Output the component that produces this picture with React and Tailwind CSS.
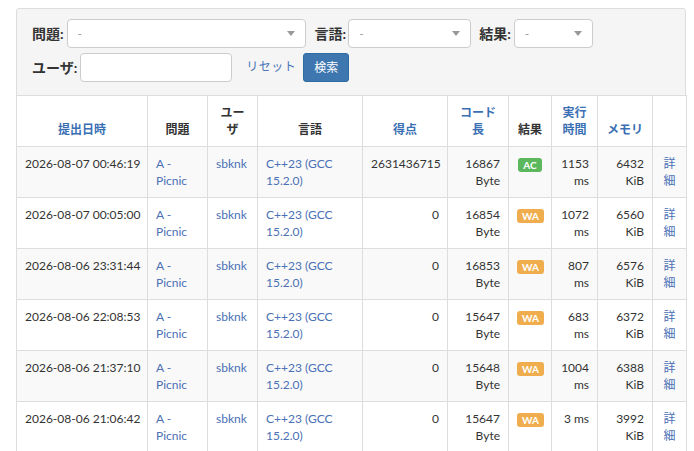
import React from "react";

const rows = [
  { date: "2026-08-07 00:46:19", score: "2631436715", len: "16867", res: "AC", time: "1153", mem: "6432" },
  { date: "2026-08-07 00:05:00", score: "0", len: "16854", res: "WA", time: "1072", mem: "6560" },
  { date: "2026-08-06 23:31:44", score: "0", len: "16853", res: "WA", time: "807", mem: "6576" },
  { date: "2026-08-06 22:08:53", score: "0", len: "15647", res: "WA", time: "683", mem: "6372" },
  { date: "2026-08-06 21:37:10", score: "0", len: "15648", res: "WA", time: "1004", mem: "6388" },
  { date: "2026-08-06 21:06:42", score: "0", len: "15647", res: "WA", time: "3", mem: "3992" },
];

const Select = ({ className }) => (
  <div
    className={`h-[29px] bg-white border border-[#ccc] rounded-[4px] flex items-center justify-between pl-[10px] pr-[10px] ${className}`}
  >
    <span className="text-[12px] text-[#999]">-</span>
    <span className="w-0 h-0 border-l-[4px] border-r-[4px] border-t-[5px] border-l-transparent border-r-transparent border-t-[#999]" />
  </div>
);

const Th = ({ children, link, className = "" }) => (
  <th
    className={`border border-[#ddd] px-2 py-2 align-bottom text-center font-bold ${
      link ? "text-[#3a70b3]" : "text-[#333]"
    } ${className}`}
  >
    {children}
  </th>
);

const Td = ({ children, className = "" }) => (
  <td className={`border border-[#ddd] px-2 py-2 align-top ${className}`}>{children}</td>
);

export default function App() {
  return (
    <div
      className="bg-white min-h-screen pt-2 text-[#333]"
      style={{ fontFamily: "Lato, 'Noto Sans CJK JP', sans-serif" }}
    >
      <div className="ml-4 w-[670px] border border-[#ddd] rounded-t-[3px] bg-[#f5f5f5]">
        <div className="pl-[15px] pt-[10px] pb-[13px] flex flex-col gap-[4px]">
          <div className="flex items-center">
            <span className="text-[14px] font-bold mr-[3px]">問題:</span>
            <Select className="w-[239px]" />
            <span className="text-[14px] font-bold ml-[9px] mr-[2px]">言語:</span>
            <Select className="w-[123px]" />
            <span className="text-[14px] font-bold ml-[8px] mr-[3px]">結果:</span>
            <Select className="w-[79px]" />
          </div>
          <div className="flex items-center">
            <span className="text-[14px] font-bold mr-[3px]">ユーザ:</span>
            <input
              type="text"
              className="w-[152px] h-[29px] bg-white border border-[#ccc] rounded-[4px]"
            />
            <a className="text-[12px] text-[#4a74b5] ml-[14px] tracking-[0.5px]">リセット</a>
            <button className="ml-[7px] mt-[1px] w-[46px] h-[29px] bg-[#3e76b0] border border-[#2e6da4] rounded-[3px] text-white text-[12px]">
              検索
            </button>
          </div>
        </div>
        <table className="w-[670px] -ml-px table-fixed border-collapse bg-white text-[12px] leading-[17px]">
          <colgroup>
            <col className="w-[131px]" />
            <col className="w-[60px]" />
            <col className="w-[50px]" />
            <col className="w-[105px]" />
            <col className="w-[85px]" />
            <col className="w-[61px]" />
            <col className="w-[43px]" />
            <col className="w-[46px]" />
            <col className="w-[55px]" />
            <col className="w-[34px]" />
          </colgroup>
          <thead>
            <tr>
              <Th link>提出日時</Th>
              <Th>問題</Th>
              <Th>ユーザ</Th>
              <Th>言語</Th>
              <Th link>得点</Th>
              <Th link>コード長</Th>
              <Th>結果</Th>
              <Th link>実行時間</Th>
              <Th link>メモリ</Th>
              <Th></Th>
            </tr>
          </thead>
          <tbody>
            {rows.map((r, i) => (
              <tr key={i} className={i % 2 === 0 ? "bg-[#f9f9f9]" : "bg-white"}>
                <Td className="whitespace-nowrap">{r.date}</Td>
                <Td>
                  <a className="text-[#4a70b5]">A - Picnic</a>
                </Td>
                <Td>
                  <a className="text-[#4a70b5]">sbknk</a>
                </Td>
                <Td>
                  <a className="text-[#4a70b5]">C++23 (GCC 15.2.0)</a>
                </Td>
                <Td className="text-right">{r.score}</Td>
                <Td className="text-right">{r.len} Byte</Td>
                <Td className="text-center">
                  <span
                    className={`inline-block mt-[3px] px-[5px] rounded-[3px] text-white font-bold text-[10px] leading-[14px] ${
                      r.res === "AC" ? "bg-[#5cb85c]" : "bg-[#f0ad4e]"
                    }`}
                  >
                    {r.res}
                  </span>
                </Td>
                <Td className="text-right">{r.time} ms</Td>
                <Td className="text-right">{r.mem} KiB</Td>
                <Td className="text-center">
                  <a className="text-[#4a70b5]">詳細</a>
                </Td>
              </tr>
            ))}
          </tbody>
        </table>
      </div>
    </div>
  );
}
